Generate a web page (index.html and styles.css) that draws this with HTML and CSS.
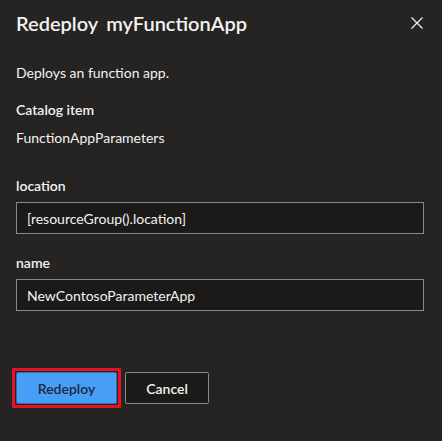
FILE: index.html
```html
<!DOCTYPE html>
<html>
<head>
<meta charset="utf-8">
<link rel="stylesheet" href="styles.css">
</head>
<body>
<div class="panel">
  <div class="header">
    <h1 class="title"><span>Redeploy</span><span class="name">myFunctionApp</span></h1>
    <button class="close" aria-label="Close">
      <svg width="12" height="12" viewBox="0 0 12 12"><path d="M0.5 0.5 L11.5 11.5 M11.5 0.5 L0.5 11.5" stroke="#f3f2f1" stroke-width="1.2" fill="none"/></svg>
    </button>
  </div>
  <p class="desc">Deploys an function app.</p>
  <div class="label">Catalog item</div>
  <p class="value">FunctionAppParameters</p>
  <div class="field">
    <div class="label">location</div>
    <div class="input">[resourceGroup().location]</div>
  </div>
  <div class="field">
    <div class="label">name</div>
    <div class="input">NewContosoParameterApp</div>
  </div>
  <div class="actions">
    <div class="highlight"><button class="btn primary">Redeploy</button></div>
    <button class="btn secondary">Cancel</button>
  </div>
</div>
</body>
</html>
```
FILE: styles.css
```css
* { box-sizing: border-box; }
html, body { margin: 0; padding: 0; }
body {
  background: #252423;
  color: #f3f2f1;
  font-family: "Lato", "Open Sans", sans-serif;
  font-size: 14px;
}
.panel { padding: 0 18px 0 16px; }
.header {
  display: flex;
  justify-content: space-between;
  align-items: center;
  height: 44px;
  padding-top: 1px;
}
.title {
  margin: 0;
  font-size: 20px;
  font-weight: 600;
  display: flex;
  gap: 8px;
  color: #f3f2f1;
}
.close {
  background: none;
  border: 0;
  padding: 0;
  width: 12px;
  height: 12px;
  margin-right: 1px;
  display: flex;
}
.desc { margin: 19px 0 0; line-height: 20px; }
.label { font-weight: 600; line-height: 20px; }
.desc + .label { margin-top: 17px; }
.value { margin: 8px 0 0; line-height: 20px; }
.field { margin-top: 28px; }
.field + .field { margin-top: 19px; }
.input {
  margin-top: 6px;
  height: 32px;
  border: 1px solid #8a8886;
  background: #1b1a19;
  padding: 0 10px;
  display: flex;
  align-items: center;
  color: #f3f2f1;
}
.actions {
  margin-top: 57px;
  display: flex;
  align-items: center;
  gap: 4px;
}
.highlight {
  border: 3px solid #e81123;
  padding: 1px;
  margin-left: -4px;
  display: flex;
}
.btn {
  height: 32px;
  font-family: inherit;
  font-size: 14px;
  font-weight: 600;
  border-radius: 2px;
  padding: 0;
}
.primary {
  width: 101px;
  background: #479ef5;
  color: #1b2a3c;
  border: 1px solid #2f6fae;
}
.secondary {
  width: 84px;
  background: #1b1a19;
  color: #f3f2f1;
  border: 1px solid #8a8886;
}
```
